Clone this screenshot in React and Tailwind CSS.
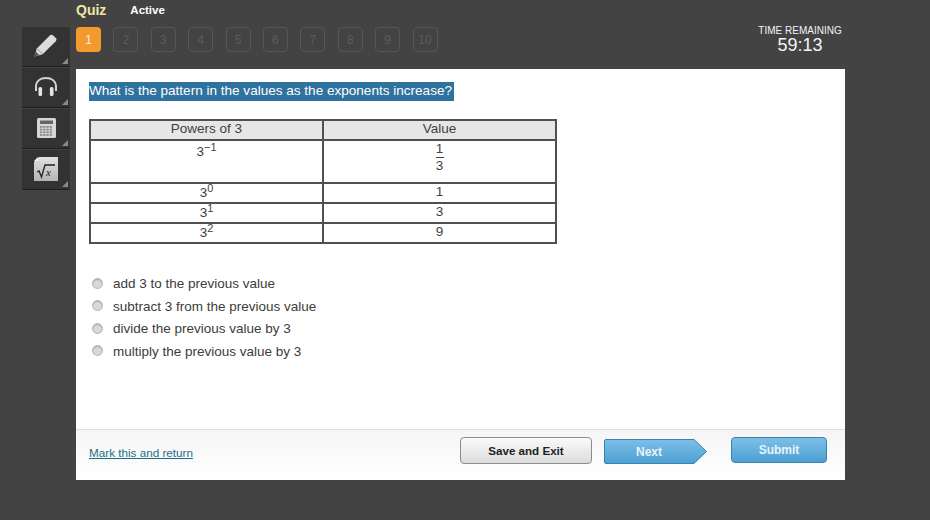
import React from "react";

const pages = [1, 2, 3, 4, 5, 6, 7, 8, 9, 10];

const options = [
  "add 3 to the previous value",
  "subtract 3 from the previous value",
  "divide the previous value by 3",
  "multiply the previous value by 3",
];

const powers = [
  { exp: "0", value: "1" },
  { exp: "1", value: "3" },
  { exp: "2", value: "9" },
];

function PencilIcon() {
  return (
    <svg className="mr-0.5" width="25" height="25" viewBox="0 0 26 26">
      <path d="M1.5 24.5 L4 16 L17.5 2.5 Q19 1.2 20.5 2.2 L24 5.5 Q25 7 23.7 8.5 L10 22 Z" fill="#dcdcdc" />
      <path d="M1.5 24.5 L3 19.5 L6.5 23 Z" fill="#555" />
      <path d="M4 16 L10 22" stroke="#999" strokeWidth="1" />
    </svg>
  );
}

function HeadphonesIcon() {
  return (
    <svg width="24" height="22" viewBox="0 0 24 22">
      <path d="M2 15 V11 C2 5 6.5 2 12 2 C17.5 2 22 5 22 11 V15" fill="none" stroke="#d4d4d4" strokeWidth="2" />
      <rect x="4.5" y="11" width="3.6" height="9" rx="1.5" fill="#e4e4e4" />
      <rect x="15.9" y="11" width="3.6" height="9" rx="1.5" fill="#e4e4e4" />
    </svg>
  );
}

function CalculatorIcon() {
  const keys = [];
  for (let r = 0; r < 4; r++) {
    for (let c = 0; c < 4; c++) {
      keys.push(<rect key={r + "-" + c} x={3 + c * 3.2} y={8 + r * 2.7} width="2.3" height="1.8" fill="#8a8a8a" />);
    }
  }
  return (
    <svg width="19" height="20" viewBox="0 0 19 20">
      <rect x="0" y="0" width="19" height="20" rx="1.5" fill="#d6d6d6" />
      <rect x="3" y="2.5" width="13" height="3.5" fill="#666" />
      {keys}
    </svg>
  );
}

function SqrtIcon() {
  return (
    <svg width="24" height="24" viewBox="0 0 24 24">
      <defs>
        <linearGradient id="sqrtFill" x1="0" y1="0" x2="0" y2="1">
          <stop offset="0" stopColor="#e2e2e2" />
          <stop offset="1" stopColor="#b4b4b4" />
        </linearGradient>
      </defs>
      <path d="M0 5 L5 0 H24 V24 H0 Z" fill="url(#sqrtFill)" />
      <path d="M0 4 H4 V0 Z" fill="#f4f4f4" />
      <path d="M3 15 L5 14 L7.5 20 L11 8 H21" fill="none" stroke="#222" strokeWidth="1.3" />
      <text x="12" y="19" fontSize="11" fontStyle="italic" fontFamily="Liberation Serif, serif" fill="#222">x</text>
    </svg>
  );
}

function ToolButton({ children }) {
  return (
    <div className="relative h-10 pb-0.5 flex items-center justify-center bg-[#333333] border-b border-[#1e1e1e] mb-px">
      {children}
      <span className="absolute right-0.5 bottom-0.5 w-0 h-0 border-l-[6px] border-l-transparent border-b-[6px] border-b-[#8a8a8a]" />
    </div>
  );
}

function Power({ exp }) {
  return (
    <span>
      3<sup className="text-[11px] align-baseline relative -top-[5px]">{exp}</sup>
    </span>
  );
}

export default function App() {
  return (
    <div className="w-[930px] h-[520px] overflow-hidden bg-[#434343] flex font-['Liberation_Sans',Arial,sans-serif]">
      {/* tools */}
      <div className="w-[76px] pl-[22px] pr-1.5 pt-[27px] shrink-0">
        <ToolButton><PencilIcon /></ToolButton>
        <ToolButton><HeadphonesIcon /></ToolButton>
        <ToolButton><CalculatorIcon /></ToolButton>
        <ToolButton><SqrtIcon /></ToolButton>
      </div>

      <div className="w-[769px] shrink-0">
        {/* header */}
        <div className="h-[69px] flex justify-between">
          <div>
            <div className="h-[27px] pt-0.5 flex items-start">
              <span className="text-[14px] leading-4 font-bold text-[#f2e6a6]">Quiz</span>
              <span className="ml-[24px] text-[11.5px] leading-4 font-bold text-white">Active</span>
            </div>
            <div className="flex gap-[12.4px]">
              {pages.map((p) =>
                p === 1 ? (
                  <div key={p} className="w-[25px] h-[25px] rounded-sm bg-[#f39a2e] text-[#f8f0e0] text-[12px] flex items-center justify-center">
                    {p}
                  </div>
                ) : (
                  <div key={p} className="w-[25px] h-[25px] rounded-sm border border-[#565656] text-[#5c5c5c] text-[12px] flex items-center justify-center">
                    {p}
                  </div>
                )
              )}
            </div>
          </div>
          <div className="w-[112px] mr-[-11px] pt-[25px] text-center text-[#f4f4f4]">
            <div className="text-[10px] leading-3">TIME REMAINING</div>
            <div className="text-[18px] leading-[17px]">59:13</div>
          </div>
        </div>

        {/* card */}
        <div className="h-[411px] bg-white flex flex-col">
          <div className="flex-1 pl-[13px] pt-[13px]">
            <div className="h-[19px] w-[365px] bg-[#2f729e] text-white text-[13.55px] leading-[18px] whitespace-nowrap">
              What is the pattern in the values as the exponents increase?
            </div>

            <table className="mt-[18px] w-[468px] table-fixed border-collapse text-[13.5px] text-[#3f3f3f] text-center">
              <tbody>
                <tr className="h-5 bg-[#e6e6e6] leading-[14px]">
                  <td className="border-2 border-[#505050] p-0 pb-0.5">Powers of 3</td>
                  <td className="border-2 border-[#505050] p-0 pb-0.5">Value</td>
                </tr>
                <tr className="h-[43px] leading-4">
                  <td className="border-2 border-[#505050] p-0 pt-[3px] align-top">
                    <Power exp="−1" />
                  </td>
                  <td className="border-2 border-[#505050] p-0 align-top">
                    <div className="w-2 mx-auto flex flex-col items-center leading-[16px]">
                      <span>1</span>
                      <span className="w-2 border-t border-[#3f3f3f]">3</span>
                    </div>
                  </td>
                </tr>
                {powers.map((row) => (
                  <tr key={row.exp} className="h-5 leading-[14px]">
                    <td className="border-2 border-[#505050] p-0"><Power exp={row.exp} /></td>
                    <td className="border-2 border-[#505050] p-0 pb-0.5">{row.value}</td>
                  </tr>
                ))}
              </tbody>
            </table>

            <div className="mt-[29px] flex flex-col">
              {options.map((opt) => (
                <div key={opt} className="h-[22.5px] flex items-center text-[13.5px] text-[#3c3c3c]">
                  <span className="w-[11px] h-[11px] ml-[3px] mr-[10px] mb-0.5 rounded-full border border-[#b5b5b5] bg-[#d9d9d9] shadow-[inset_0_1px_1px_#aaaaaa]" />
                  <span>{opt}</span>
                </div>
              ))}
            </div>
          </div>

          {/* footer */}
          <div className="h-[51px] border-t border-[#dddddd] bg-gradient-to-b from-[#f5f5f5] to-white pl-[13px] pr-[18px] flex items-start">
            <a className="mt-[15px] text-[11.7px] leading-4 text-[#1d6f86] underline">Mark this and return</a>
            <div className="ml-auto mt-[7px] flex items-start">
              <button className="w-[132px] h-[27px] rounded-sm border border-[#8c8c8c] bg-gradient-to-b from-[#fafafa] to-[#dcdcdc] text-[11.6px] font-bold text-[#222222]">
                Save and Exit
              </button>
              <button className="relative ml-3 mt-0.5 w-[103px] h-[25px] text-[12px] font-bold text-[#e6f3fb]">
                <svg className="absolute inset-0" width="103" height="25" viewBox="0 0 103 25">
                  <defs>
                    <linearGradient id="nextFill" x1="0" y1="0" x2="0" y2="1">
                      <stop offset="0" stopColor="#7cc0e8" />
                      <stop offset="1" stopColor="#4c9fd2" />
                    </linearGradient>
                  </defs>
                  <path d="M2 0.5 H90 L102.5 12.5 L90 24.5 H2 Q0.5 24.5 0.5 23 V2 Q0.5 0.5 2 0.5 Z" fill="url(#nextFill)" stroke="#3d82ad" />
                </svg>
                <span className="relative mr-[13px]">Next</span>
              </button>
              <button className="ml-6 w-[96px] h-[26px] rounded-sm border border-[#3d82ad] bg-gradient-to-b from-[#7cc0e8] to-[#4c9fd2] text-[12px] font-bold text-[#e6f3fb]">
                Submit
              </button>
            </div>
          </div>
        </div>
      </div>
    </div>
  );
}
